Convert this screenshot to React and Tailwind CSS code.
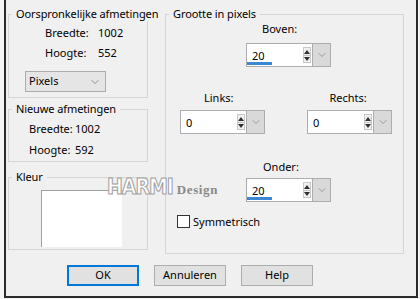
import { ChevronDown } from 'lucide-react'

const font = "font-['Noto_Sans',sans-serif]"

function Group({ title, className, children }) {
  return (
    <fieldset className={`border border-[#d5d5d5] m-0 p-0 min-w-0 ${className}`}>
      <legend className="ml-[3px] px-[4px] whitespace-nowrap text-[11px] leading-[14px] tracking-[-0.1px] text-black">{title}</legend>
      {children}
    </fieldset>
  )
}

function Spinner({ value, bar, className }) {
  return (
    <div className={`flex h-[24px] ${className}`}>
      <div className="relative flex flex-1 items-center border border-[#abadb3] bg-white">
        <span className="pl-[5px] text-[11px] leading-none">{value}</span>
        <div className="ml-auto mr-[1px] flex h-[16px] w-[8px] flex-col items-center justify-center border border-[#c8c8c8] bg-[#f0f0f0]">
          <svg width="6" height="4" viewBox="0 0 6 4"><path d="M3 0L6 4H0z" fill="#303030" /></svg>
          <div className="h-[1px] w-full bg-[#c8c8c8] my-[1px]" />
          <svg width="6" height="4" viewBox="0 0 6 4"><path d="M0 0H6L3 4z" fill="#303030" /></svg>
        </div>
        {bar && <div className="absolute bottom-[1px] left-0 h-[3px] w-[25px] bg-[#3c87d2]" />}
      </div>
      <div className="flex w-[18px] items-center justify-center border border-l-0 border-[#adadad] bg-[#d9d9d9]">
        <ChevronDown className="h-[12px] w-[12px] text-[#6f6f6f]" strokeWidth={1.2} />
      </div>
    </div>
  )
}

function Btn({ label, primary }) {
  return (
    <button
      className={`h-[21px] w-[72px] bg-[#e1e1e1] text-[11px] ${
        primary ? 'border-2 border-[#0078d7]' : 'border border-[#adadad]'
      }`}
    >
      {label}
    </button>
  )
}

export default function App() {
  return (
    <div className={`w-[420px] h-[299px] bg-[#f4f4f4] pl-[4px] pr-[2px] pb-[1px] ${font} text-[11px] text-black`}>
      <div className="relative h-full border-l-2 border-r-2 border-b-2 border-[#2a2a2a] bg-[#f0f0f0] pl-[2px]">
        <div className="flex gap-[17px]">
          <div className="flex w-[140px] flex-col">
            <Group title="Oorspronkelijke afmetingen" className="mt-[7px] h-[91px]">
              <div className="mt-[2px] grid grid-cols-[53px_1fr] pl-[36px]">
                <span className="leading-[20px]">Breedte:</span>
                <span className="leading-[20px]">1002</span>
                <span className="leading-[20px]">Hoogte:</span>
                <span className="leading-[20px]">552</span>
              </div>
              <div className="ml-[16px] mt-[8px] flex h-[21px] w-[81px] items-center justify-between border border-[#acacac] bg-[#e5e5e5] pl-[3px] pr-[4px]">
                <span>Pixels</span>
                <ChevronDown className="h-[12px] w-[12px] text-[#555]" strokeWidth={1.2} />
              </div>
            </Group>
            <Group title="Nieuwe afmetingen" className="mt-[4px] h-[60px]">
              <div className="mt-[2px] grid grid-cols-[46px_1fr] pl-[20px]">
                <span className="leading-[21px]">Breedte:</span>
                <span className="leading-[21px]">1002</span>
                <span className="leading-[21px]">Hoogte:</span>
                <span className="leading-[21px]">592</span>
              </div>
            </Group>
            <Group title="Kleur" className="mt-[8px] h-[80px]">
              <div className="ml-[32px] mt-[6px] h-[57px] w-[81px] border-l border-t border-[#a0a0a0] bg-white" />
            </Group>
          </div>

          <Group title="Grootte in pixels" className="mt-[7px] h-[247px] w-[239px]">
            <div className="mt-[1px] pl-[96px] leading-[14px]">Boven:</div>
            <Spinner value="20" bar className="ml-[80px] mt-[7px] w-[85px]" />
            <div className="mt-[24px] flex leading-[14px]">
              <span className="pl-[38px]">Links:</span>
              <span className="pl-[96px]">Rechts:</span>
            </div>
            <div className="mt-[5px] flex">
              <Spinner value="0" className="ml-[14px] w-[85px]" />
              <Spinner value="0" className="ml-[42px] w-[85px]" />
            </div>
            <div className="mt-[26px] pl-[97px] leading-[14px]">Onder:</div>
            <Spinner value="20" bar className="ml-[80px] mt-[4px] w-[85px]" />
            <label className="ml-[11px] mt-[13px] flex items-center gap-[3px]">
              <span className="h-[13px] w-[13px] border border-[#333] bg-white" />
              <span className="leading-[13px]">Symmetrisch</span>
            </label>
          </Group>
        </div>

        <div className="mt-[11px] flex gap-[15px] pl-[59px]">
          <Btn label="OK" primary />
          <Btn label="Annuleren" />
          <Btn label="Help" />
        </div>

        <div className="absolute left-[101px] top-[176px] flex items-baseline gap-[4px]">
          <span className="font-['DejaVu_Sans_Condensed',sans-serif] text-[21px] leading-[22px] font-bold tracking-[-1px] text-white [-webkit-text-stroke:1px_#a0a0a0]">
            HARMI
          </span>
          <span className="font-['Liberation_Serif',serif] text-[13px] font-bold tracking-[0.6px] text-[#8a8a8a]">
            Design
          </span>
        </div>
      </div>
    </div>
  )
}
